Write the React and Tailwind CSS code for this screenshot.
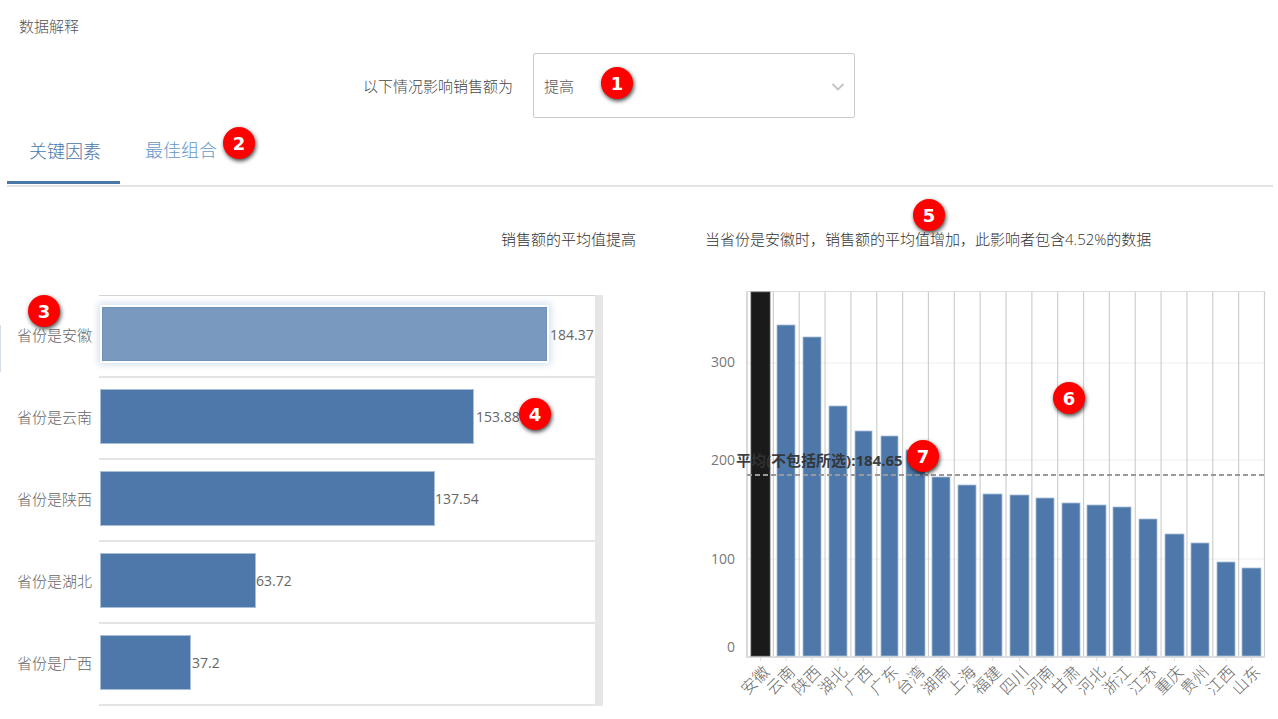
const FONT = "font-['Open_Sans','Noto_Sans_CJK_SC',sans-serif]";

const rows = [
  { label: "省份是安徽", value: "184.37", w: 445, active: true, gap: 3 },
  { label: "省份是云南", value: "153.88", w: 374, gap: 2 },
  { label: "省份是陕西", value: "137.54", w: 335, gap: 0 },
  { label: "省份是湖北", value: "63.72", w: 156, gap: 0 },
  { label: "省份是广西", value: "37.2", w: 91, gap: 1 },
];

const bars = [
  ["安徽", 751, 770, 292],
  ["云南", 777, 795, 325],
  ["陕西", 803, 821, 337],
  ["湖北", 829, 847, 406],
  ["广西", 855, 872, 431],
  ["广东", 881, 898, 436],
  ["台湾", 906, 925, 450],
  ["湖南", 932, 950, 477],
  ["上海", 958, 976, 485],
  ["福建", 983, 1002, 494],
  ["四川", 1010, 1029, 495],
  ["河南", 1036, 1054, 498],
  ["甘肃", 1062, 1080, 503],
  ["河北", 1087, 1106, 505],
  ["浙江", 1113, 1131, 507],
  ["江苏", 1139, 1157, 519],
  ["重庆", 1165, 1184, 534],
  ["贵州", 1191, 1209, 543],
  ["江西", 1217, 1235, 562],
  ["山东", 1242, 1261, 568],
];

const badges = [
  { n: 1, x: 617, y: 83 },
  { n: 2, x: 239, y: 143 },
  { n: 3, x: 44, y: 311 },
  { n: 4, x: 535, y: 414 },
  { n: 5, x: 929, y: 215 },
  { n: 6, x: 1069, y: 398 },
  { n: 7, x: 923, y: 456 },
];

function Badge({ n, x, y }) {
  return (
    <div
      className="absolute w-[32px] h-[32px] rounded-full bg-[#ff0000] text-white text-[18px] font-bold flex items-center justify-center shadow-[1px_2px_4px_rgba(0,0,0,0.75)] font-['DejaVu_Sans',sans-serif]"
      style={{ left: x - 16, top: y - 16 }}
    >
      {n}
    </div>
  );
}

function Row({ label, value, w, active, gap }) {
  return (
    <div className="flex h-[82px]">
      <div className="w-[99px] pl-[17px] pb-[4px] shrink-0 flex items-center text-[15px] font-light text-[#666666] whitespace-nowrap">
        {label}
      </div>
      <div className="flex-1 flex items-center pb-[4px] min-w-0 border-b-2 border-[#e4e4e4]">
        {active ? (
          <div
            className="h-[54px] ml-[3px] bg-[#7a99bf] border border-[#6f90b8] shadow-[0_0_0_2px_#ffffff,0_0_7px_4px_#d4e0ee]"
            style={{ width: w }}
          />
        ) : (
          <div
            className="h-[55px] ml-[1px] bg-[#4e78a9] border border-[#a9bfd8]"
            style={{ width: w }}
          />
        )}
        <span className="text-[14px] text-[#666666] whitespace-nowrap" style={{ marginLeft: gap }}>
          {value}
        </span>
      </div>
    </div>
  );
}

function BarChart() {
  const gridX = Array.from({ length: 20 }, (_, i) => 747.5 + 25.85 * i + 25.85);
  return (
    <svg viewBox="700 285 578 434" className="w-[578px] h-[434px] block">
      {[363, 460, 559].map((y) => (
        <line key={y} x1="747" x2="1264" y1={y} y2={y} stroke="#f3f3f3" strokeWidth="1.5" />
      ))}
      {gridX.map((x) => (
        <line key={x} x1={x} x2={x} y1="292" y2="657" stroke="#cfcfcf" strokeWidth="1.2" />
      ))}
      <line x1="747" x2="747" y1="291" y2="657" stroke="#cccccc" strokeWidth="1.5" />
      <line x1="747" x2="1265" y1="291.5" y2="291.5" stroke="#dddddd" strokeWidth="1" />
      <line x1="746" x2="1265" y1="657" y2="657" stroke="#dddddd" strokeWidth="2" />
      {bars.map(([name, a, b, top], i) => (
        <rect
          key={name}
          x={a}
          y={top}
          width={b - a}
          height={656 - top}
          fill={i === 0 ? "#1a1a1a" : "#4e78a9"}
          stroke={i === 0 ? "#555555" : "#a9bfd8"}
          strokeWidth="0.8"
        />
      ))}
      {bars.map(([name, a, b]) => {
        const c = (a + b) / 2;
        return (
          <g key={name}>
            <line x1={c} x2={c} y1="658" y2="661" stroke="#e2e2e2" />
            <text
              x={c + 10}
              y={673}
              textAnchor="end"
              fontSize="16"
              fontWeight="300"
              fill="#666666"
              transform={`rotate(-45 ${c + 10} 673)`}
            >
              {name}
            </text>
          </g>
        );
      })}
      {[["300", 367], ["200", 465], ["100", 564], ["0", 652]].map(([t, y]) => (
        <text key={t} x="735" y={y} textAnchor="end" fontSize="14" fill="#777777">
          {t}
        </text>
      ))}
      <line x1="747" x2="1264" y1="475" y2="475" stroke="#999999" strokeWidth="1.8" strokeDasharray="5 3" />
      <text x="736" y="466" fontSize="15" fontWeight="700" fill="#333333" fillOpacity="0.95">
        平均(不包括所选):184.65
      </text>
    </svg>
  );
}

export default function App() {
  return (
    <div className={`relative w-[1278px] h-[719px] overflow-hidden bg-white ${FONT}`}>
      <div className="h-[53px] pl-[19px] pt-[16px] text-[15px] font-light leading-[20px] text-[#555555]">数据解释</div>

      <div className="h-[65px] flex items-center justify-end pr-[423px]">
        <span className="mr-[20px] text-[15px] font-light text-[#444444] relative top-[1px]">以下情况影响销售额为</span>
        <div className="w-[322px] h-[65px] border border-[#cccccc] rounded-[2px] flex items-center justify-between pl-[10px] pr-[9px]">
          <span className="text-[15px] font-light text-[#555555] relative top-[1px]">提高</span>
          <svg width="14" height="8" viewBox="0 0 14 8" fill="none" className="relative top-[1px]">
            <path d="M1.5 1 L7 6.5 L12.5 1" stroke="#c4c4c4" strokeWidth="1.8" />
          </svg>
        </div>
      </div>

      <div className="ml-[7px] mr-[5px] h-[69px] flex border-b-2 border-[#e4e4e4]">
        <div className="w-[113px] h-[66px] pl-[22px] pt-[21px] border-b-[3px] border-[#4a76a8] text-[18px] font-light leading-[24px] text-[#4a76a8]">
          关键因素
        </div>
        <div className="ml-[25px] pt-[20px] text-[18px] font-light leading-[24px] text-[#6598c8]">最佳组合</div>
      </div>

      <div className="h-[98px] flex pt-[42px] text-[15px] font-light leading-[20px] text-[#333333]">
        <span className="ml-[501px] w-[204px]">销售额的平均值提高</span>
        <span>当省份是安徽时，销售额的平均值增加，此影响者包含4.52%的数据</span>
      </div>

      <div className="flex">
        <div className="w-[603px] shrink-0 pt-[10px] flex">
          <div className="w-[595px]">
            <div className="ml-[99px] h-[1px] bg-[#d4d4d4]" />
            {rows.map((r) => (
              <Row key={r.label} {...r} />
            ))}
          </div>
          <div className="w-[8px] h-[411px] bg-[#e6e6e6]" />
        </div>
        <div className="ml-[97px] shrink-0">
          <BarChart />
        </div>
      </div>

      <div className="absolute left-0 top-[325px] w-[1px] h-[47px] bg-[#d5dde8]" />
      {badges.map((b) => (
        <Badge key={b.n} {...b} />
      ))}
    </div>
  );
}
